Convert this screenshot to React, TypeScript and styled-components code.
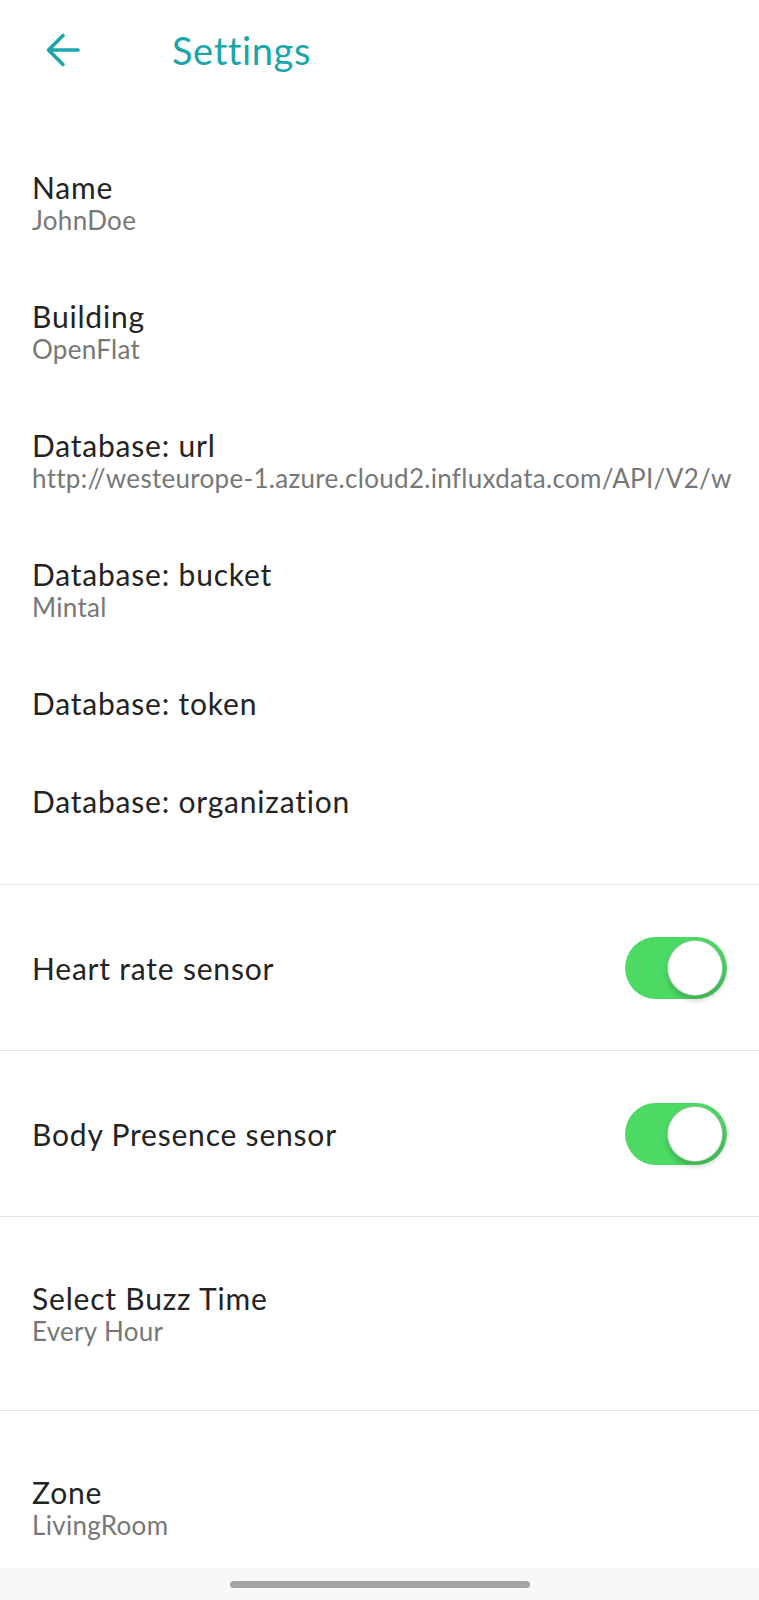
import styled, { createGlobalStyle } from "styled-components";

const GlobalStyle = createGlobalStyle`
  html, body {
    margin: 0;
    padding: 0;
    background: #ffffff;
  }
  body {
    font-family: "Lato", "Noto Sans", sans-serif;
    -webkit-font-smoothing: antialiased;
  }
`;

interface IInfoRow {
  label: string;
  value?: string;
}

const infoRows: IInfoRow[] = [
  { label: "Name", value: "JohnDoe" },
  { label: "Building", value: "OpenFlat" },
  {
    label: "Database: url",
    value: "http://westeurope-1.azure.cloud2.influxdata.com/API/V2/w",
  },
  { label: "Database: bucket", value: "Mintal" },
  { label: "Database: token" },
  { label: "Database: organization" },
];

const sensors = ["Heart rate sensor", "Body Presence sensor"];

function BackArrow() {
  return (
    <svg width="36" height="36" viewBox="0 0 36 36" fill="none">
      <path
        d="M33 18H4M18 3.5L3.5 18L18 32.5"
        stroke="#1ba6aa"
        strokeWidth="3.6"
        strokeLinecap="round"
        strokeLinejoin="round"
      />
    </svg>
  );
}

export default function App() {
  return (
    <>
      <GlobalStyle />
      <Page>
        <Header>
          <BackButton>
            <BackArrow />
          </BackButton>
          <Title>Settings</Title>
        </Header>

        <Content>
          <InfoList>
            {infoRows.map((row) => (
              <InfoRow key={row.label}>
                <Label>{row.label}</Label>
                {row.value && <Value>{row.value}</Value>}
              </InfoRow>
            ))}
          </InfoList>

          {sensors.map((sensor) => (
            <ToggleRow key={sensor}>
              <Label>{sensor}</Label>
              <Switch>
                <Knob />
              </Switch>
            </ToggleRow>
          ))}

          <SelectRow>
            <Label>Select Buzz Time</Label>
            <Value>Every Hour</Value>
          </SelectRow>

          <SelectRow>
            <Label>Zone</Label>
            <Value>LivingRoom</Value>
          </SelectRow>
        </Content>

        <NavBar>
          <NavHandle />
        </NavBar>
      </Page>
    </>
  );
}

const Page = styled.div`
  display: flex;
  flex-direction: column;
  width: 759px;
  height: 1600px;
  overflow: hidden;
  background: #ffffff;
`;

const Header = styled.header`
  display: flex;
  align-items: center;
  height: 100px;
  flex-shrink: 0;
`;

const BackButton = styled.div`
  display: flex;
  align-items: center;
  justify-content: center;
  width: 36px;
  height: 36px;
  margin-left: 45px;
  margin-right: 91px;
`;

const Title = styled.h1`
  margin: 0;
  font-size: 38px;
  line-height: 44px;
  font-weight: 400;
  letter-spacing: 0.6px;
  color: #1ba6aa;
`;

const Content = styled.main`
  flex: 1;
  min-height: 0;
  overflow: hidden;
  display: flex;
  flex-direction: column;
`;

const InfoList = styled.section`
  display: flex;
  flex-direction: column;
  flex-shrink: 0;
  padding: 38px 0 34px;
  border-bottom: 1.5px solid #e3e3e3;
`;

const InfoRow = styled.div`
  display: flex;
  flex-direction: column;
  padding: 31px 32px;
`;

const Label = styled.div`
  font-size: 30px;
  line-height: 36px;
  letter-spacing: 0.8px;
  color: #232323;
  white-space: nowrap;
`;

const Value = styled.div`
  font-size: 26px;
  line-height: 31px;
  letter-spacing: 0.3px;
  color: #777777;
  white-space: nowrap;
`;

const ToggleRow = styled.div`
  display: flex;
  align-items: center;
  justify-content: space-between;
  flex-shrink: 0;
  height: 165px;
  padding: 0 32px;
  border-bottom: 1.5px solid #e3e3e3;
`;

const Switch = styled.div`
  display: flex;
  align-items: center;
  justify-content: flex-end;
  width: 102px;
  height: 62px;
  padding: 0 4px;
  box-sizing: border-box;
  border-radius: 31px;
  background: #4cd964;
`;

const Knob = styled.div`
  width: 56px;
  height: 56px;
  border-radius: 50%;
  background: #ffffff;
  box-sizing: border-box;
  border: 1px solid rgba(40, 140, 60, 0.45);
  box-shadow: 1px 4px 6px rgba(0, 0, 0, 0.22);
`;

const SelectRow = styled.div`
  display: flex;
  flex-direction: column;
  justify-content: center;
  flex-shrink: 0;
  height: 193px;
  padding: 0 32px;
  border-bottom: 1.5px solid #e3e3e3;

  &:last-child {
    border-bottom: none;
  }
`;

const NavBar = styled.div`
  display: flex;
  align-items: center;
  justify-content: center;
  height: 32px;
  flex-shrink: 0;
  background: #f7f7f7;
`;

const NavHandle = styled.div`
  width: 300px;
  height: 7px;
  border-radius: 4px;
  background: #a4a4a4;
`;
